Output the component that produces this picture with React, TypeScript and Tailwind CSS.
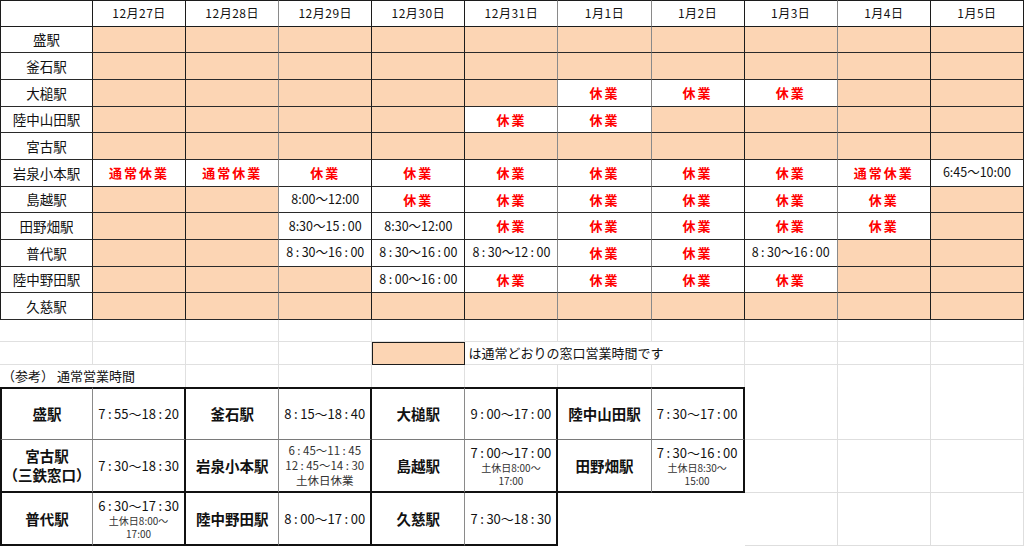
import React from "react";

const DATES = [
  "12月27日",
  "12月28日",
  "12月29日",
  "12月30日",
  "12月31日",
  "1月1日",
  "1月2日",
  "1月3日",
  "1月4日",
  "1月5日",
];

// o = normal hours (orange), k = 休業, t = 通常休業, anything else = time text
// "：" marks a spaced colon, ":" a tight one
const SCHEDULE: { name: string; cells: string[] }[] = [
  { name: "盛駅", cells: ["o", "o", "o", "o", "o", "o", "o", "o", "o", "o"] },
  { name: "釜石駅", cells: ["o", "o", "o", "o", "o", "o", "o", "o", "o", "o"] },
  { name: "大槌駅", cells: ["o", "o", "o", "o", "o", "k", "k", "k", "o", "o"] },
  { name: "陸中山田駅", cells: ["o", "o", "o", "o", "k", "k", "o", "o", "o", "o"] },
  { name: "宮古駅", cells: ["o", "o", "o", "o", "o", "o", "o", "o", "o", "o"] },
  { name: "岩泉小本駅", cells: ["t", "t", "k", "k", "k", "k", "k", "k", "t", "6:45～10:00"] },
  { name: "島越駅", cells: ["o", "o", "8:00～12:00", "k", "k", "k", "k", "k", "k", "o"] },
  { name: "田野畑駅", cells: ["o", "o", "8:30～15：00", "8:30～12:00", "k", "k", "k", "k", "k", "o"] },
  { name: "普代駅", cells: ["o", "o", "8：30～16：00", "8：30～16：00", "8：30～12：00", "k", "k", "8：30～16：00", "o", "o"] },
  { name: "陸中野田駅", cells: ["o", "o", "o", "8：00～16：00", "k", "k", "k", "k", "o", "o"] },
  { name: "久慈駅", cells: ["o", "o", "o", "o", "o", "o", "o", "o", "o", "o"] },
];

// right border colour per column index (0 = station column)
const GRAY_COLS = new Set([2, 5, 6, 8]);

function rightBorder(col: number) {
  return GRAY_COLS.has(col) ? "border-r-[#8a8a8a]" : "border-r-[#1c1c1c]";
}

function Time({ text }: { text: string }) {
  const parts = text.split("：");
  return (
    <span className="whitespace-nowrap">
      {parts.map((part, i) => (
        <React.Fragment key={i}>
          {i > 0 ? <span className="mx-[2.5px]">:</span> : null}
          {part}
        </React.Fragment>
      ))}
    </span>
  );
}

function ScheduleCell({ value, col }: { value: string; col: number }) {
  const base = `flex items-center justify-center border-r border-b border-b-[#2a2a2a] ${rightBorder(col)}`;
  if (value === "o") {
    return <div className={`${base} bg-[#fcd5b4]`} />;
  }
  if (value === "k" || value === "t") {
    return (
      <div className={`${base} bg-white text-[13px] font-bold tracking-[2px] text-[#ff0000]`}>
        {value === "k" ? "休業" : "通常休業"}
      </div>
    );
  }
  return (
    <div className={`${base} bg-white text-[12.5px] text-[#111]`}>
      <Time text={value} />
    </div>
  );
}

type RefCell = { station: string; sub?: string; time: string; notes?: string[] };

const REFERENCE: RefCell[][] = [
  [
    { station: "盛駅", time: "7：55～18：20" },
    { station: "釜石駅", time: "8：15～18：40" },
    { station: "大槌駅", time: "9：00～17：00" },
    { station: "陸中山田駅", time: "7：30～17：00" },
  ],
  [
    { station: "宮古駅", sub: "（三鉄窓口）", time: "7：30～18：30" },
    { station: "岩泉小本駅", time: "", notes: ["6：45～11：45", "12：45～14：30", "土休日休業"] },
    { station: "島越駅", time: "7：00～17：00", notes: ["土休日8:00～", "17:00"] },
    { station: "田野畑駅", time: "7：30～16：00", notes: ["土休日8:30～", "15:00"] },
  ],
  [
    { station: "普代駅", time: "6：30～17：30", notes: ["土休日8:00～", "17:00"] },
    { station: "陸中野田駅", time: "8：00～17：00" },
    { station: "久慈駅", time: "7：30～18：30" },
  ],
];

function ReferenceRow({ row, index }: { row: RefCell[]; index: number }) {
  const bottom = index === 0 ? "border-b border-b-[#7a7a7a]" : "border-b-2 border-b-[#111]";
  const top = index === 0 ? "border-t-2 border-t-[#111]" : "";
  const cells: React.ReactNode[] = [];

  row.forEach((cell, i) => {
    cells.push(
      <div
        key={`s-${i}`}
        className={`flex flex-col items-center justify-center border-r border-r-[#8a8a8a] ${bottom} ${top} ${
          i === 0 ? "border-l-2 border-l-[#111]" : ""
        } text-[14.5px] font-bold leading-[19px] text-[#111]`}
      >
        <span>{cell.station}</span>
        {cell.sub ? <span>{cell.sub}</span> : null}
      </div>
    );
    cells.push(
      <div
        key={`t-${i}`}
        className={`flex flex-col items-center justify-center border-r-2 border-r-[#111] ${bottom} ${top} text-[#111]`}
      >
        {cell.time ? (
          <span className="text-[13px] leading-[17px]">
            <Time text={cell.time} />
          </span>
        ) : null}
        {cell.notes?.map((note, n) =>
          cell.time ? (
            <span key={n} className="text-[10px] leading-[13px] text-[#333]">
              {note}
            </span>
          ) : (
            <span key={n} className="text-[11.5px] leading-[15px] text-[#333]">
              <Time text={note} />
            </span>
          )
        )}
      </div>
    );
  });

  const remaining = 11 - row.length * 2;
  for (let i = 0; i < remaining; i++) {
    const col = row.length * 2 + i;
    const light = col >= 8;
    cells.push(
      <div
        key={`e-${i}`}
        className={light ? "border-r border-b border-r-[#dedede] border-b-[#dedede]" : ""}
      />
    );
  }

  return <>{cells}</>;
}

export default function App() {
  return (
    <div
      className="h-[546px] w-[1024px] overflow-hidden bg-white text-[#111]"
      style={{ fontFamily: '"Noto Sans CJK JP", "Noto Sans", sans-serif' }}
    >
      {/* holiday schedule */}
      <div className="grid grid-cols-[93px_repeat(10,93.1px)] auto-rows-[26.67px]">
        <div className="border-t border-l border-r border-b border-[#1c1c1c]" />
        {DATES.map((date, i) => (
          <div
            key={date}
            className={`flex items-center justify-center border-t border-b border-r border-t-[#1c1c1c] border-b-[#1c1c1c] ${rightBorder(
              i + 1
            )} text-[12px] tracking-[0.5px]`}
          >
            {date}
          </div>
        ))}

        {SCHEDULE.map((row) => (
          <React.Fragment key={row.name}>
            <div className="flex items-center justify-center border-l border-r border-b border-l-[#1c1c1c] border-r-[#1c1c1c] border-b-[#2a2a2a] text-[13.5px]">
              {row.name}
            </div>
            {row.cells.map((value, i) => (
              <ScheduleCell key={i} value={value} col={i + 1} />
            ))}
          </React.Fragment>
        ))}
      </div>

      {/* legend rows */}
      <div className="grid grid-cols-[93px_repeat(10,93.1px)] auto-rows-[22.33px]">
        {Array.from({ length: 11 }).map((_, i) => (
          <div key={`a-${i}`} className="border-r border-b border-[#e0e0e0]" />
        ))}

        {Array.from({ length: 4 }).map((_, i) => (
          <div key={`b-${i}`} className="border-r border-b border-[#e0e0e0]" />
        ))}
        <div className="border border-[#1c1c1c] bg-[#fcd5b4]" />
        <div className="col-span-3 flex items-center whitespace-nowrap border-r border-b border-[#e0e0e0] pl-[3px] text-[13px]">
          は通常どおりの窓口営業時間です
        </div>
        {Array.from({ length: 3 }).map((_, i) => (
          <div key={`c-${i}`} className="border-r border-b border-[#e0e0e0]" />
        ))}

        <div className="col-span-2 flex items-center whitespace-nowrap border-r border-[#e0e0e0] pl-[2px] text-[13px]">
          （参考） 通常営業時間
        </div>
        {Array.from({ length: 9 }).map((_, i) => (
          <div key={`d-${i}`} className="border-r border-[#e0e0e0]" />
        ))}
      </div>

      {/* regular opening hours */}
      <div className="grid grid-cols-[93px_repeat(10,93.1px)] auto-rows-[53px]">
        {REFERENCE.map((row, i) => (
          <ReferenceRow key={i} row={row} index={i} />
        ))}
      </div>
    </div>
  );
}
